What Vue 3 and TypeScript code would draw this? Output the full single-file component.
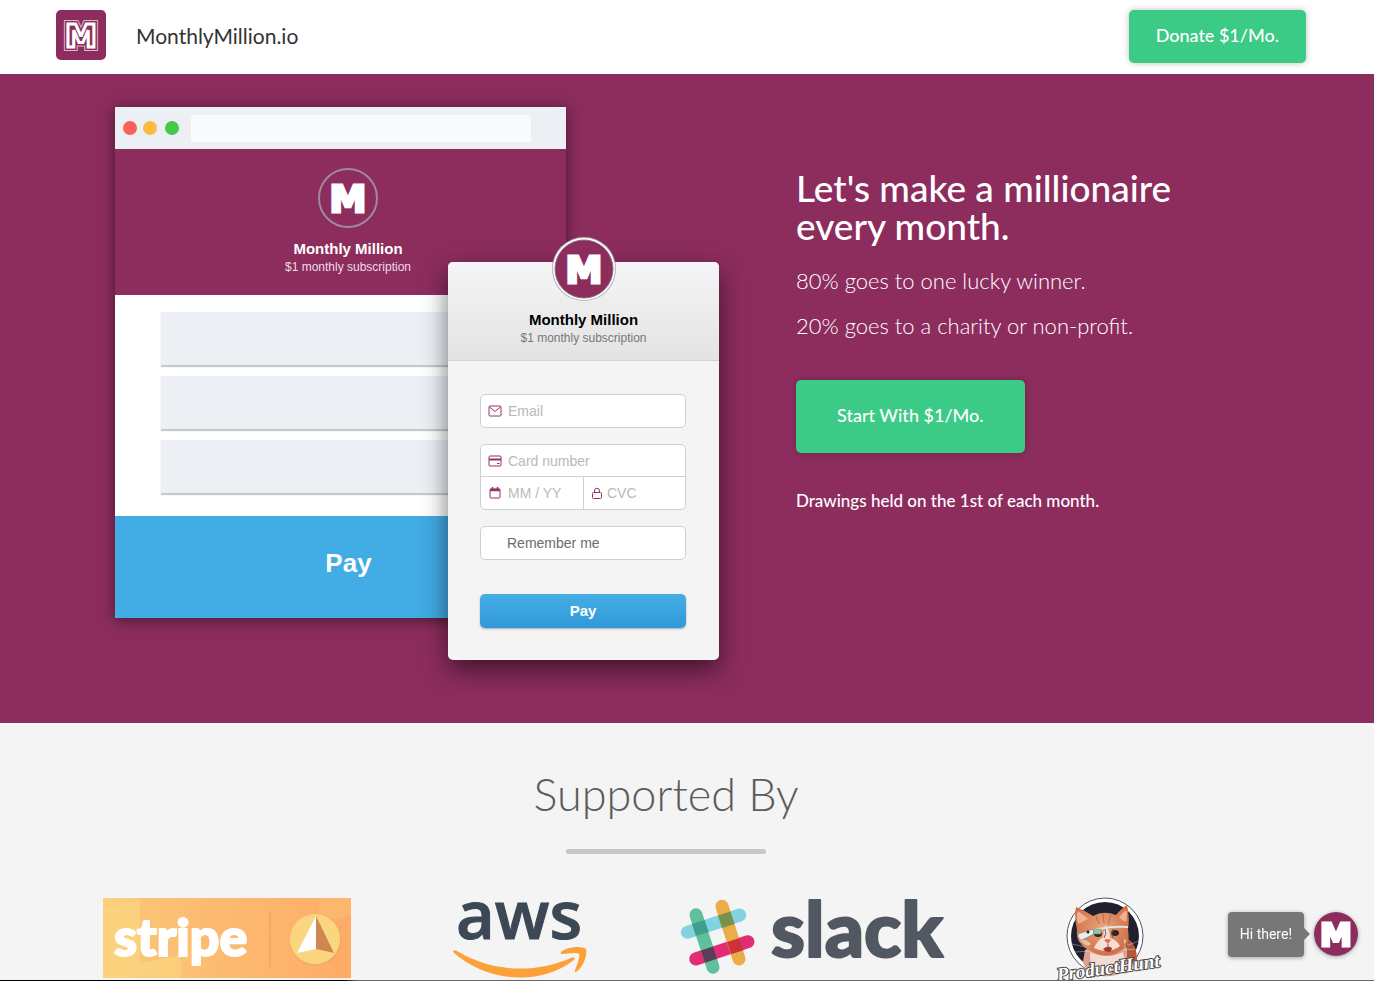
<script setup lang="ts">
import { ref } from 'vue'

const email = ref('')
const cardNumber = ref('')
const expiry = ref('')
const cvc = ref('')
const remember = ref(false)
const previewRows: number[] = [1, 2, 3]
</script>

<template>
  <div class="page">
    <header class="topbar">
      <a class="brand" href="#">
        <svg class="brand-logo" viewBox="0 0 50 50" aria-hidden="true">
          <rect width="50" height="50" rx="5" fill="#8c2d5e" />
          <g class="mark" font-size="32" text-anchor="middle">
            <text x="25" y="37" fill="#e2c4d3" stroke="#dcb9cb" stroke-width="8">M</text>
            <text x="25" y="37" fill="#8c2d5e" stroke="#8c2d5e" stroke-width="6">M</text>
            <text x="25" y="37" fill="#8c2d5e" stroke="#fff" stroke-width="3">M</text>
          </g>
        </svg>
        <span class="brand-name">MonthlyMillion.io</span>
      </a>
      <button class="cta cta-small" type="button">Donate $1/Mo.</button>
    </header>

    <section class="hero">
      <div class="illustration">
        <div class="window">
          <div class="chrome">
            <i class="dot red"></i><i class="dot amber"></i><i class="dot green"></i>
            <div class="address"></div>
          </div>
          <div class="window-head">
            <svg class="ring" viewBox="0 0 60 60" aria-hidden="true">
              <circle cx="30" cy="30" r="29" fill="none" stroke="#a0899a" stroke-width="2" />
              <text class="mark" x="30" y="44" font-size="37" text-anchor="middle" fill="#fff" stroke="#fff" stroke-width="3">M</text>
            </svg>
            <strong>Monthly Million</strong>
            <span>$1 monthly subscription</span>
          </div>
          <div class="window-body">
            <div v-for="row in previewRows" :key="row" class="preview-row"></div>
          </div>
          <div class="window-pay">Pay</div>
        </div>

        <form class="card" @submit.prevent>
          <div class="card-head">
            <svg class="avatar" viewBox="0 0 64 64" aria-hidden="true">
              <circle cx="32" cy="32" r="32" fill="#b9b3b7" />
              <circle cx="32" cy="32" r="31" fill="#fff" />
              <circle cx="32" cy="32" r="29" fill="#8c2d5e" stroke="#86707d" />
              <text class="mark" x="32" y="46" font-size="37" text-anchor="middle" fill="#fff" stroke="#fff" stroke-width="3">M</text>
            </svg>
            <strong>Monthly Million</strong>
            <span>$1 monthly subscription</span>
          </div>
          <div class="card-body">
            <label class="field box">
              <svg viewBox="0 0 14 12" class="icon"><rect x="1" y="1" width="12" height="10" rx="1" /><path d="M1.500 2 L7 6.500 L12.500 2" /></svg>
              <input v-model="email" type="email" placeholder="Email" aria-label="Email" />
            </label>
            <div class="box group">
              <label class="field wide">
                <svg viewBox="0 0 14 12" class="icon"><rect x="1" y="1" width="12" height="10" rx="1" /><path d="M1 4.500 H13" stroke-width="2" /><path d="M9 8.500 H11.500" /></svg>
                <input v-model="cardNumber" type="text" placeholder="Card number" aria-label="Card number" />
              </label>
              <label class="field">
                <svg viewBox="0 0 14 12" class="icon"><rect x="2" y="2" width="10" height="9" rx="1" /><path d="M2 3 H12" stroke-width="2.500" /><path d="M4.500 0 V2 M9.500 0 V2" stroke-width="1.500" /></svg>
                <input v-model="expiry" type="text" placeholder="MM / YY" aria-label="Expiry date" />
              </label>
              <label class="field cvc">
                <svg viewBox="0 0 12 13" class="icon lock"><rect x="1.500" y="5.500" width="9" height="6" rx="1" /><path d="M3.500 5.500 V4 a2.500 2.800 0 0 1 5 0 V5.500" /></svg>
                <input v-model="cvc" type="text" placeholder="CVC" aria-label="CVC" />
              </label>
            </div>
            <label class="field box remember">
              <input v-model="remember" type="checkbox" />
              <span>Remember me</span>
            </label>
            <button class="card-pay" type="submit">Pay</button>
          </div>
        </form>
      </div>

      <div class="copy">
        <h1>Let's make a millionaire every month.</h1>
        <p>80% goes to one lucky winner.</p>
        <p>20% goes to a charity or non-profit.</p>
        <button class="cta cta-large" type="button">Start With $1/Mo.</button>
        <p class="note">Drawings held on the 1st of each month.</p>
      </div>
    </section>

    <section class="supporters">
      <h2>Supported By</h2>
      <hr />
      <ul>
        <li>
          <svg width="248" height="80" viewBox="0 0 248 80" role="img" aria-label="stripe">
            <defs>
              <linearGradient id="warm" x1="0" y1="0" x2="1" y2="0">
                <stop offset="0" stop-color="#fbd07e" /><stop offset="0.5" stop-color="#fcba70" /><stop offset="1" stop-color="#fdab66" />
              </linearGradient>
            </defs>
            <rect width="248" height="80" fill="url(#warm)" />
            <path d="M3 10 L37 3 V65 L3 72 Z M0 72 L78 57 V80 H0 Z" fill="#fbd67e" opacity=".6" />
            <path d="M37 0 H216 V20 L78 50 V57 L37 65 Z" fill="#fcb570" opacity=".3" />
            <path d="M216 0 H248 V18 L216 24 Z" fill="#fcbd73" opacity=".6" />
            <text class="stripe" x="11" y="58" font-size="52" fill="#fff" stroke="#fff" stroke-width="2">stripe</text>
            <path d="M167 14 V69" stroke="#e49d5d" stroke-width="1" />
            <circle cx="213" cy="42" r="26" fill="#eea964" opacity=".6" />
            <circle cx="212" cy="41" r="25" fill="#fbd680" />
            <path d="M213 18 L194 55 L213 51 Z" fill="#fff" />
            <path d="M213 18 L231 55 L213 51 Z" fill="#cf8651" />
          </svg>
        </li>
        <li>
          <svg width="135" height="80" viewBox="0 0 135 80" role="img" aria-label="aws">
            <text class="aws" x="4" y="41" font-size="67" fill="#3c4855" stroke="#3c4855">aws</text>
            <path fill="#fba137" d="M1 54 Q1 51 5 53 C40 74 82 76 119 60 Q124 58 122 62 C91 87 36 86 1 54 Z" />
            <path fill="#fba137" d="M109 54 C116 48 131 48 134 51 C136 56 131 70 124 74 Q122 75 123 72 C126 65 128 58 127 56 C124 54 115 56 110 56 Q108 56 109 54 Z" />
          </svg>
        </li>
        <li>
          <svg width="264" height="80" viewBox="0 0 264 80" role="img" aria-label="slack">
            <g fill="none" stroke-width="13" stroke-linecap="round">
              <path d="M6.300 34.300 L58.700 17" stroke="#82d3e0" />
              <path d="M14.700 61 L67 43.700" stroke="#e22d75" />
              <path d="M15 16.700 L32 69.300" stroke="#5fc19c" />
              <path d="M41 8.300 L58 61" stroke="#ebad49" />
            </g>
            <path d="M11 26 L23.500 22 L27.600 34 L15 38 Z" fill="#409f8a" />
            <path d="M37 17.500 L49.500 13.500 L53.600 26 L41 30 Z" fill="#77914e" />
            <path d="M19.800 52.600 L32.200 48.600 L36.200 60.800 L23.800 64.800 Z" fill="#5c3c58" />
            <path d="M46 44 L58.400 40 L62.400 52.200 L50 56.200 Z" fill="#cc3238" />
            <text class="slack" x="90" y="59" font-size="77" fill="#515861" stroke="#515861" stroke-width="2" stroke-linejoin="round">slack</text>
          </svg>
        </li>
        <li>
          <svg width="98" height="82" viewBox="0 0 98 82" role="img" aria-label="Product Hunt">
            <defs>
              <clipPath id="badge"><path d="M10 0 H86 V45 A38 38 0 0 1 10 45 Z" /></clipPath>
              <radialGradient id="fur" cx=".5" cy=".45" r=".6"><stop offset="0" stop-color="#e8a57e" /><stop offset="1" stop-color="#cf6c42" /></radialGradient>
            </defs>
            <circle cx="48" cy="38" r="38" fill="#fff" stroke="#555" />
            <circle cx="48" cy="38" r="34" fill="#20202f" />
            <g clip-path="url(#badge)">
              <path d="M28 52 Q48 40 72 50 L80 64 Q66 80 44 78 Q28 74 26 64 Z" fill="#dba28c" />
              <path d="M33 54 Q50 62 66 54 L70 76 H34 Z" fill="#f1dbd2" />
              <path d="M70 40 Q80 46 80 62 L70 66 Z" fill="#b9583c" />
              <path d="M20 32 Q17 18 19 9 Q27 12 36 18 Q46 12 59 17 Q65 10 70 7 Q73 20 71 32 Q74 48 63 53 Q50 62 34 53 Q18 46 20 32 Z" fill="url(#fur)" />
              <path d="M21 26 Q19 18 21 13 Q27 17 31 21 Z M69 24 Q71 16 69 12 Q65 15 62 20 Z" fill="#efb093" />
              <path d="M39 18 L42 26 M46 16 L47 25 M54 17 L51 26" stroke="#c4683f" />
              <path d="M48 27 Q53 32 53 40 Q60 42 63 48 Q51 57 37 50 Q40 43 46 39 Z" fill="#f6dfd2" />
              <path d="M22 42 Q29 40 34 46 Q32 49 28 47 Z M67 41 Q71 41 67 47 Z" fill="#e9bfa9" />
              <ellipse cx="41" cy="36" rx="4" ry="3" fill="#35231f" />
              <ellipse cx="58" cy="35" rx="4" ry="3" fill="#35231f" />
              <path d="M47 42 Q51 40 54 42 L51 46 Z" fill="#e46f58" />
              <path d="M46 51 Q51 47 55 50 Q54 55 51 54 Q48 54 46 51 Z" fill="#9c3b35" />
              <path d="M51 46 V49" stroke="#9c5548" />
              <path d="M33 50 L15 46 M33 53 L18 54 M66 49 L82 43 M66 52 L80 51" stroke="#fff" stroke-width=".5" opacity=".7" />
            </g>
            <path d="M22 38 Q45 27 71 29" fill="none" stroke="#dce5e3" stroke-width="2" />
            <path d="M21 36 L36 31 L37 36 L25 42 Q21 42 21 36 Z" fill="#e9eeeb" stroke="#7b8582" stroke-width=".7" />
            <circle cx="31" cy="34" r="1.500" fill="#222" />
            <path d="M36 32 L44 31 L44 36 L37 36 Z" fill="#91c99f" stroke="#668775" stroke-width=".5" />
            <path d="M48 31 Q50 36 47 40 M56 31 Q53 36 56 40" fill="none" stroke="#66635f" />
            <g class="script" transform="rotate(-8 2 85)" font-size="19">
              <text x="1" y="83" fill="#444" stroke="#444" stroke-width="2">ProductHunt</text>
              <text x="1" y="83" fill="#fff">ProductHunt</text>
            </g>
          </svg>
        </li>
      </ul>
    </section>
    <div class="edge"></div>

    <aside class="chat">
      <span class="bubble">Hi there!</span>
      <button type="button" aria-label="Open chat">
        <svg viewBox="0 0 44 44" aria-hidden="true">
          <circle cx="22" cy="22" r="22" fill="#8c2d5e" />
          <text class="mark" x="22" y="34" font-size="32" text-anchor="middle" fill="#fff" stroke="#fff" stroke-width="3">M</text>
        </svg>
      </button>
    </aside>
  </div>
</template>

<style>
body {
  margin: 0;
  background: #f4f4f4;
}
</style>

<style scoped>
* {
  box-sizing: border-box;
}
.page {
  min-height: 100vh;
  display: flex;
  flex-direction: column;
  background: #f4f4f4;
  font-family: Lato, "Open Sans", sans-serif;
}
svg {
  display: block;
  overflow: visible;
}
button {
  border: 0;
  padding: 0;
  font-family: inherit;
  cursor: pointer;
}
.mark {
  font-family: "DejaVu Sans", sans-serif;
  font-weight: 700;
  stroke-miterlimit: 2;
}
.topbar {
  display: flex;
  justify-content: space-between;
  align-items: flex-start;
  padding: 10px 68px 11px 56px;
  background: #fff;
}
.brand {
  display: flex;
  align-items: center;
  gap: 30px;
  color: #333;
  text-decoration: none;
}
.brand-logo {
  width: 50px;
  height: 50px;
}
.brand-name {
  padding-top: 2px;
  font-size: 21px;
  line-height: 30px;
}
.cta {
  border-radius: 5px;
  background: #3bcb87;
  color: #fff;
  font-size: 18px;
  font-weight: 500;
  line-height: 24px;
  box-shadow: 0 0 6px rgba(0, 0, 0, 0.25);
}
.cta-small {
  padding: 13px 27px 16px;
}
.cta-large {
  padding: 23px 41px 26px;
}
.hero {
  display: flex;
  gap: 77px;
  padding: 33px 115px 63px;
  background: #8c2d5e;
  color: #fff;
}
.illustration {
  position: relative;
  flex: 0 0 604px;
  padding-bottom: 42px;
  font-family: "Liberation Sans", Arial, sans-serif;
}
.window {
  width: 451px;
  background: #fff;
  box-shadow: 0 2px 14px rgba(0, 0, 0, 0.5);
}
.chrome {
  display: flex;
  align-items: center;
  gap: 6px;
  height: 42px;
  padding: 0 35px 0 8px;
  background: #ecf0f5;
}
.dot {
  width: 14px;
  height: 14px;
  border-radius: 50%;
}
.red {
  background: #fc605b;
}
.amber {
  background: #fdbc40;
}
.green {
  margin-left: 2px;
  background: #47c84b;
}
.address {
  flex: 1;
  height: 27px;
  margin-left: 6px;
  border-radius: 2px;
  background: #f8fafb;
}
.window-head,
.card-head {
  display: flex;
  flex-direction: column;
  align-items: center;
  font-size: 12px;
  line-height: 16px;
}
.window-head strong,
.card-head strong {
  font-size: 15px;
  line-height: 20px;
}
.window-head {
  padding: 19px 0 20px 15px;
  background: #8c2d5e;
}
.window-head span {
  color: #eddce5;
}
.ring {
  width: 60px;
  height: 60px;
  margin-bottom: 11px;
}
.window-body {
  display: flex;
  flex-direction: column;
  gap: 11px;
  padding: 17px 30px 23px 46px;
}
.preview-row {
  height: 53px;
  background: #ecf0f5;
  box-shadow: 0 2px 1px #c5c9cd;
}
.window-pay {
  padding: 27px 0 35px 16px;
  background: #42ace4;
  font-size: 26px;
  font-weight: 700;
  line-height: 40px;
  text-align: center;
}
.card {
  position: absolute;
  right: 0;
  bottom: 0;
  width: 271px;
  border-radius: 5px;
  background: #f4f4f4;
  box-shadow: 0 10px 26px rgba(0, 0, 0, 0.55);
}
.card-head {
  padding-bottom: 14px;
  border-bottom: 1px solid #d2d2d2;
  border-radius: 5px 5px 0 0;
  background: linear-gradient(#f5f5f7, #e3e3e3);
  color: #777;
}
.card-head strong {
  color: #000;
}
.avatar {
  width: 64px;
  height: 64px;
  margin: -25px 0 9px;
}
.card-body {
  display: flex;
  flex-direction: column;
  gap: 16px;
  padding: 33px 33px 32px 32px;
}
.box {
  border: 1px solid #d0d0d0;
  border-radius: 5px;
  background: #fff;
}
.field {
  display: flex;
  align-items: center;
  gap: 6px;
  height: 32px;
  padding: 0 7px;
  font-size: 14px;
}
.field.box {
  height: 34px;
}
.field input {
  flex: 1;
  min-width: 0;
  width: 0;
  padding: 0;
  border: 0;
  outline: 0;
  background: transparent;
  color: #555;
  font-family: inherit;
  font-size: 14px;
}
.field input::placeholder {
  color: #b9b9b9;
  opacity: 1;
}
.group {
  display: grid;
  grid-template-columns: 1fr 1fr;
}
.wide {
  grid-column: 1 / -1;
  border-bottom: 1px solid #d0d0d0;
}
.cvc {
  border-left: 1px solid #d0d0d0;
  gap: 4px;
}
.icon {
  flex: none;
  width: 14px;
  height: 12px;
  fill: none;
  stroke: #93336a;
}
.icon.lock {
  width: 12px;
  height: 13px;
}
.remember {
  margin-bottom: 18px;
  color: #6b6b6b;
}
.field.remember input {
  flex: none;
  width: 13px;
  height: 13px;
  margin: 0;
  appearance: none;
}
.card-pay {
  border-radius: 5px;
  background: linear-gradient(#45aee4, #3198db);
  box-shadow: 0 1px 2px rgba(0, 0, 0, 0.3);
  color: #fff;
  font-size: 15px;
  font-weight: 700;
  line-height: 34px;
}
.copy {
  flex: 1;
  padding-top: 62px;
}
h1 {
  max-width: 400px;
  margin: 0 0 13px;
  font-size: 37px;
  font-weight: 500;
  line-height: 38px;
}
.copy p {
  margin: 0;
  font-size: 22px;
  font-weight: 300;
  line-height: 45px;
}
.cta-large {
  margin: 32px 0 36px;
}
.copy p.note {
  font-size: 17px;
  font-weight: 500;
  line-height: 24px;
}
.supporters {
  flex: 1;
  padding: 47px 42px 0 0;
}
h2 {
  margin: 0;
  color: #5c5c5c;
  font-size: 45px;
  font-weight: 300;
  line-height: 48px;
  text-align: center;
}
hr {
  width: 200px;
  height: 5px;
  margin: 31px auto 44px;
  border: 0;
  border-radius: 2px;
  background: #c8c8c8;
}
ul {
  display: grid;
  grid-template-columns: repeat(4, 1fr);
  justify-items: center;
  max-width: 1172px;
  margin: 0 auto;
  padding: 0;
  list-style: none;
}
.stripe {
  font-family: Lato, sans-serif;
  font-weight: 900;
}
.aws {
  font-family: "Open Sans", "Noto Sans", sans-serif;
  font-weight: 600;
}
.slack {
  font-family: Lato, sans-serif;
  font-weight: 900;
}
.script {
  font-family: "Liberation Serif", serif;
  font-style: italic;
  font-weight: 700;
}
.edge {
  height: 1px;
  background: linear-gradient(90deg, #000 25%, #666 26%);
}
.chat {
  position: fixed;
  right: 16px;
  bottom: 24px;
  display: flex;
  align-items: flex-start;
  gap: 10px;
}
.bubble {
  position: relative;
  padding: 0 12px;
  border-radius: 4px;
  background: #777;
  box-shadow: 0 1px 4px rgba(0, 0, 0, 0.35);
  color: #fff;
  font-family: Roboto, sans-serif;
  font-size: 14px;
  line-height: 45px;
}
.bubble::after {
  content: "";
  position: absolute;
  top: 16px;
  left: 100%;
  border: 6px solid transparent;
  border-left-color: #777;
}
.chat button {
  width: 44px;
  height: 44px;
  border-radius: 50%;
  background: none;
  box-shadow: 0 1px 4px rgba(0, 0, 0, 0.35);
}
</style>
